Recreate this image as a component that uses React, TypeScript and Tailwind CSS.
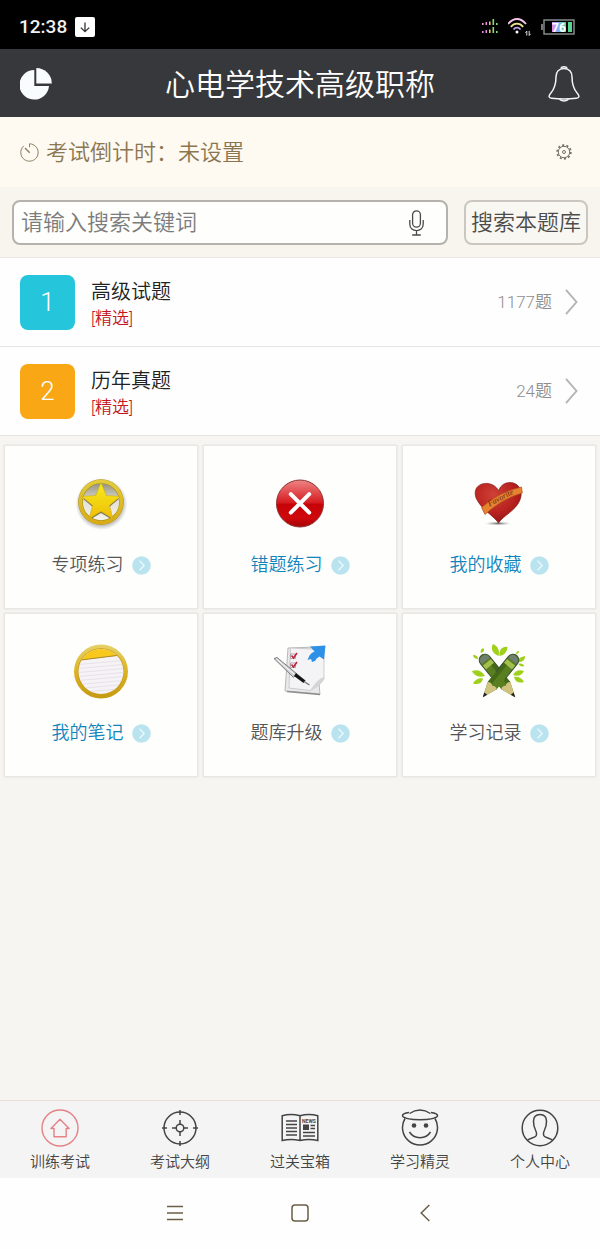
import type { ReactNode } from "react";

function StatusBar() {
  return (
    <div className="flex h-[49px] items-center justify-between bg-black pr-[25px] pl-[19px] pt-1 text-[#f0f0f0]">
      <div className="flex items-center gap-2">
        <span className="text-[19px] leading-6 font-medium">12:38</span>
        <svg width="20" height="20" viewBox="0 0 20 20" aria-hidden="true">
          <rect width="20" height="20" rx="2" fill="#fff" />
          <path d="M10 5.5v9M5.8 10.6 10 14.6l4.2-4" fill="none" stroke="#333" strokeWidth="1.3" />
        </svg>
      </div>
      <div className="flex items-center gap-2">
        <svg width="18" height="16" viewBox="0 0 18 16" aria-hidden="true">
          <g fill="#e58bd8">
            <rect x="0" y="4" width="1.6" height="2" />
            <rect x="0" y="12" width="1.6" height="2" />
            <rect x="3.5" y="3" width="1.6" height="3" />
            <rect x="3.5" y="11" width="1.6" height="3" />
          </g>
          <g fill="#e8c65a">
            <rect x="7" y="2.500" width="1.6" height="3.500" />
            <rect x="7" y="10.500" width="1.6" height="3.500" />
          </g>
          <g fill="#7fe07a">
            <rect x="10.5" y="0" width="1.6" height="6" />
            <rect x="10.5" y="8" width="1.6" height="6" />
            <rect x="14" y="4" width="1.6" height="2" />
            <rect x="14" y="12" width="1.6" height="2" />
          </g>
        </svg>
        <svg width="25" height="20" viewBox="0 0 25 20" fill="none" aria-hidden="true">
          <path d="M0 7C5.500 .3 12.500 .3 18 7" stroke="#f3c3ea" strokeWidth="1.800" />
          <path d="M2.800 9.800c3.600-4.200 8.800-4.200 12.400 0" stroke="#efe08a" strokeWidth="1.800" />
          <path d="M5.500 12.500c2-2.400 5-2.400 7 0" stroke="#c5a6ef" strokeWidth="1.800" />
          <circle cx="9" cy="15" r="1.500" fill="#fff" />
          <path d="M18.800 18.500v-4.400l-1.400 1.600M21.200 13.900v4.600l1.400-1.700" stroke="#ddd" strokeWidth="1" />
        </svg>
        <svg width="34" height="16" viewBox="0 0 34 16" aria-hidden="true">
          <defs>
            <linearGradient id="charge">
              <stop offset="0" stopColor="#f08be8" />
              <stop offset=".45" stopColor="#7fb2f5" />
              <stop offset="1" stopColor="#58d590" />
            </linearGradient>
          </defs>
          <rect x="0" y="5" width="2" height="6" fill="#777" />
          <rect x="3" y="1" width="30" height="14" fill="none" stroke="#8c9490" strokeWidth="1.4" />
          <rect x="11" y="3" width="14" height="10" fill="url(#charge)" />
          <rect x="27" y="3" width="4" height="10" fill="#58d590" />
          <text x="18" y="12.500" textAnchor="middle" fontSize="12" fontWeight="700" fill="#fff">76</text>
        </svg>
      </div>
    </div>
  );
}

function Header() {
  return (
    <header className="flex h-[68px] items-center justify-between bg-[#36383c] px-5 pt-[2px] text-white">
      <button type="button" aria-label="统计">
        <svg width="32" height="32" viewBox="0 0 32 32" fill="#f8fcff" aria-hidden="true">
          <path d="M14.300 2A14.800 14.800 0 1 0 29 18H14.300z" />
          <path d="M16.300 0A15.600 15.600 0 0 1 31.800 15.600H16.300z" />
        </svg>
      </button>
      <h1 className="pt-[2px] text-[30px] leading-10 font-[350]">心电学技术高级职称</h1>
      <button type="button" aria-label="通知">
        <svg width="32" height="36" viewBox="0 0 32 36" fill="none" stroke="#f4f4f4" strokeWidth="1.500" aria-hidden="true">
          <path d="M13.400 2.800v-1.400q2.600-1.200 5.200 0v1.400" />
          <path d="M16 2.500c-5 0-8 3.400-8 8.300 0 8.400-1.600 12.300-5.300 16.500-2.800 3.200-1.700 4.700 1 5 7.500.8 17.100.8 24.600 0 2.700-.3 3.800-1.800 1-5C25.600 23.100 24 19.200 24 10.800c0-4.900-3-8.300-8-8.300z" />
          <path d="M11.500 33.200c1.500 2.400 7.500 2.400 9 0" />
        </svg>
      </button>
    </header>
  );
}

function Countdown() {
  return (
    <section className="flex h-[70px] items-center justify-between bg-[#fef9f1] pr-7 pl-5 text-[#8a7650]">
      <div className="flex items-center gap-[7px]">
        <svg width="19" height="19" viewBox="0 0 19 19" fill="none" stroke="#8d8268" strokeWidth="1" aria-hidden="true">
          <path d="M3.800 2.900A8.700 8.700 0 1 0 9.500 .8v3.400" />
          <path d="M5 5l4.700 4.800" strokeWidth="1.500" />
        </svg>
        <p className="pt-[2px] text-[22px] leading-8 font-[350]">考试倒计时：未设置</p>
      </div>
      <button type="button" aria-label="设置">
        <svg width="16" height="16" viewBox="0 0 16 16" fill="none" stroke="#777064" aria-hidden="true">
          <circle cx="8" cy="8" r="5.700" />
          <circle cx="8" cy="8" r="6.900" strokeWidth="1.600" strokeDasharray="2.170 2.170" />
          <circle cx="8" cy="8" r="1.500" />
        </svg>
      </button>
    </section>
  );
}

function SearchBar() {
  return (
    <form className="flex gap-4 bg-[#f8f4ee] px-3 pt-[13px] pb-3" onSubmit={(e) => e.preventDefault()}>
      <div className="flex h-[45px] min-w-0 flex-1 items-center rounded-lg border-2 border-[#b5b1ac] bg-[#fefefc] pr-[22px] pl-[7px]">
        <input
          type="search"
          aria-label="搜索关键词"
          placeholder="请输入搜索关键词"
          className="min-w-0 flex-1 bg-transparent text-[22px] leading-8 font-[350] text-[#444] outline-none placeholder:text-[#7c7c7c]"
        />
        <button type="button" aria-label="语音输入">
          <svg width="15" height="26" viewBox="0 0 15 26" fill="none" stroke="#4a4a4a" strokeWidth="1.300" aria-hidden="true">
            <rect x="3.600" y=".8" width="7.800" height="16.400" rx="3.900" />
            <path d="M.8 10v4.200c0 8.600 13.400 8.600 13.400 0V10M7.500 20.700v4.200M3.200 25h8.600" />
          </svg>
        </button>
      </div>
      <button type="submit" className="h-[45px] rounded-lg border-2 border-[#cbc7c0] bg-[#f9f7f2] px-[5px] text-[22px] leading-8 font-[350] text-[#4c4c4a]">
        搜索本题库
      </button>
    </form>
  );
}

const banks = [
  { no: 1, title: "高级试题", count: "1177题", color: "bg-[#25c5dc]" },
  { no: 2, title: "历年真题", count: "24题", color: "bg-[#f9a715]" },
];

function BankList() {
  return (
    <ul className="border-t border-[#eae8e5] bg-[#fefefe]">
      {banks.map((b) => (
        <li key={b.no} className="border-b border-[#e4e4e2]">
          <a href="#bank" className="flex h-[88px] items-center px-5">
            <span className={`flex h-[55px] w-[55px] items-center justify-center rounded-lg text-[26px] leading-8 font-[350] text-white ${b.color}`}>
              {b.no}
            </span>
            <span className="ml-4 flex flex-1 flex-col pt-[3px]">
              <span className="text-[20px] leading-7 font-[350] text-[#222]">{b.title}</span>
              <span className="text-[17px] leading-6 font-[350] text-[#c4161c]">[精选]</span>
            </span>
            <span className="text-[17px] leading-6 font-[350] text-[#8f8f8f]">{b.count}</span>
            <svg className="ml-3" width="16" height="26" viewBox="0 0 16 26" fill="none" stroke="#b4b4b4" strokeWidth="1.900" aria-hidden="true">
              <path d="M2 .8 12.500 13 2 25.200" />
            </svg>
          </a>
        </li>
      ))}
    </ul>
  );
}

function StarIcon() {
  return (
    <svg width="56" height="56" viewBox="0 0 56 56" aria-hidden="true">
      <defs>
        <linearGradient id="gold" x2="0" y2="1">
          <stop offset="0" stopColor="#e2cb3c" />
          <stop offset="1" stopColor="#d9ac15" />
        </linearGradient>
        <linearGradient id="starFill" x2="0" y2="1">
          <stop offset="0" stopColor="#f8ec1c" />
          <stop offset="1" stopColor="#eebd08" />
        </linearGradient>
        <radialGradient id="starShade">
          <stop offset=".75" stopColor="#666" stopOpacity=".6" />
          <stop offset="1" stopColor="#888" stopOpacity="0" />
        </radialGradient>
        <linearGradient id="starWell" x2="0" y2="1">
          <stop offset="0" stopColor="#8d8a78" />
          <stop offset=".5" stopColor="#e4e2d8" />
          <stop offset="1" stopColor="#f6f5ef" />
        </linearGradient>
      </defs>
      <circle cx="28.500" cy="29" r="26" fill="url(#starShade)" />
      <circle cx="28" cy="27" r="20.500" fill="url(#starWell)" />
      <path d="M28 10l5 12 13 .8-10 8.400 3.200 12.600L28 37l-11.200 6.800L20 31.200l-10-8.400 13-.8z" fill="#777055" transform="translate(0 1)" />
      <circle cx="28" cy="27" r="20.500" fill="none" stroke="#a48f1a" strokeWidth="4.600" />
      <circle cx="28" cy="27" r="20.600" fill="none" stroke="url(#gold)" strokeWidth="3.800" />
      <path d="M28 7.500l5.300 13 14 .9-10.800 9 3.500 13.600L28 36.600 16 44l3.500-13.600-10.800-9 14-.9z" fill="url(#starFill)" stroke="#c5a515" strokeWidth=".5" />
    </svg>
  );
}

function CrossIcon() {
  return (
    <svg width="56" height="56" viewBox="0 0 56 56" aria-hidden="true">
      <defs>
        <linearGradient id="red" x2="0" y2="1">
          <stop offset="0" stopColor="#ef8585" />
          <stop offset=".48" stopColor="#d51c20" />
          <stop offset=".52" stopColor="#c50308" />
          <stop offset=".8" stopColor="#cf080c" />
          <stop offset="1" stopColor="#a50407" />
        </linearGradient>
      </defs>
      <circle cx="28" cy="28.500" r="23.500" fill="url(#red)" stroke="#8e3434" strokeWidth="1" />
      <path d="M18.800 19.200l18.400 18.400M37.200 19.200 18.800 37.600" stroke="#fff" strokeWidth="4" strokeLinecap="round" />
    </svg>
  );
}

function HeartIcon() {
  return (
    <svg width="56" height="56" viewBox="0 0 56 56" aria-hidden="true">
      <defs>
        <radialGradient id="heart" cx=".4" cy=".3" r=".75">
          <stop offset="0" stopColor="#cf4136" />
          <stop offset=".6" stopColor="#b8221f" />
          <stop offset="1" stopColor="#8d1414" />
        </radialGradient>
        <radialGradient id="heartShade">
          <stop offset="0" stopColor="#666" />
          <stop offset="1" stopColor="#aaa" stopOpacity="0" />
        </radialGradient>
      </defs>
      <ellipse cx="27" cy="48.500" rx="13" ry="2" fill="url(#heartShade)" />
      <path d="M27.500 48C23 41 11 35 5.500 24 1 13 9 7.500 17 8.500q7 1 10.500 7Q31 7.500 39 7.500c9 0 14 9 9.500 18.500C44 36 33 40 27.500 48z" fill="url(#heart)" stroke="#7f1a1a" strokeWidth=".7" />
      <path d="M10.500 32.500Q28 17 50.500 12l.8 6Q31 23.500 14 39.500z" fill="#e8822f" stroke="#b24e1c" strokeWidth=".7" />
      <text x="18.500" y="31.500" transform="rotate(-28 18.500 31.500)" fontSize="8" fontFamily="Liberation Serif, serif" fontStyle="italic" fill="#5f2410">Favorite</text>
    </svg>
  );
}

function NotesIcon() {
  return (
    <svg width="56" height="56" viewBox="0 0 56 56" aria-hidden="true">
      <defs>
        <linearGradient id="ring" x2="0" y2="1">
          <stop offset="0" stopColor="#e6d268" />
          <stop offset=".5" stopColor="#ddb325" />
          <stop offset="1" stopColor="#c49a10" />
        </linearGradient>
        <clipPath id="noteDisc">
          <circle cx="28" cy="28.500" r="22.500" />
        </clipPath>
      </defs>
      <circle cx="28" cy="28.500" r="27" fill="url(#ring)" />
      <circle cx="28" cy="28.500" r="23.200" fill="#c69a18" />
      <g clipPath="url(#noteDisc)">
        <rect width="56" height="56" fill="#f6f3f6" />
        <path d="M0 0h56v11L0 18z" fill="#f8c81d" />
        <path d="M0 18 56 11" stroke="#a7872c" strokeWidth="1" />
        <path d="M0 22l56-5M0 26l56-5M0 30l56-5M0 34l56-5M0 38l56-5M0 42l56-5M0 46l56-5M0 50l56-5M0 54l56-5" stroke="#e2dde6" strokeWidth=".8" />
      </g>
    </svg>
  );
}

function ChecklistIcon() {
  return (
    <svg width="56" height="56" viewBox="0 0 56 56" aria-hidden="true">
      <path d="M16 5 44 4l4 47.500-4-1-31-2.500z" fill="#e9e9ea" stroke="#aaa" strokeWidth=".8" />
      <path d="M18.500 5 52 6.500V36q-4 7-14 11.500L17 45z" fill="#f4f4f6" stroke="#c3c3c6" strokeWidth=".8" />
      <path d="M52 34q-6 1-14 13.500Q47 44 52 36z" fill="#d5d5d8" />
      <path d="M15 48.500l33 3" stroke="#8d8d8d" strokeWidth="1.500" />
      <path d="M18.500 11h5v4.500h-5zM18.500 20h5v4.500h-5z" fill="#fff" stroke="#b69fa6" />
      <path d="M19.500 12.500l2 2.500 3.500-5M19.500 21.500l2 2.500 3.500-5" fill="none" stroke="#b8243c" strokeWidth="1.600" />
      <path d="M38 3.500 53.500 2.500l-1.500 14-4.500-3q-3.500 1.500-4.500 4.500l-3 1-1-3-3.500 1 2-4.500q2-3 5-4z" fill="#2d91e8" />
      <path d="M2 15.500l3-1L25 31l-3.500 3.500z" fill="#cfcfd2" stroke="#707176" strokeWidth=".9" />
      <path d="M4.500 16 22.500 31.500" stroke="#fff" strokeWidth="1" />
      <path d="M24 30l9.500 7.500-2 2.500-9.500-7z" fill="#161616" />
      <path d="M32 38.500 37.500 42" stroke="#777" strokeWidth="1.400" />
    </svg>
  );
}

function Pencil({ flip }: { flip?: boolean }) {
  return (
    <g transform={flip ? "translate(56 0) scale(-1 1)" : undefined}>
      <g transform="translate(14 17) rotate(-39)">
        <path d="M-5.800 0a5.800 5.800 0 0 1 11.600 0v33L0 48l-5.800-15z" fill="#5a7f20" />
        <path d="M-5.800 1a5.800 5.800 0 0 1 11.600 0z" fill="#6f7f70" />
        <path d="M-5.800 3h11.600v5h-11.600z" fill="#a3c04c" />
        <path d="M1.500 8h4.300v25H1.500z" fill="#456a17" />
        <path d="M-5.800 33q2.900-2.500 5.800 0 2.900-2.500 5.800 0L0 48z" fill="#d0c380" />
        <path d="M-1.800 43.300h3.600L0 48z" fill="#222" />
        <path d="M-5.800 20V0a5.800 5.800 0 0 1 11.600 0v20" fill="none" stroke="#3d5230" strokeWidth="1" />
      </g>
    </g>
  );
}

function PencilsIcon() {
  return (
    <svg width="56" height="56" viewBox="0 0 56 56" aria-hidden="true">
      <g fill="#9fd01b">
        <path d="M27.500 13C20 10 20 4 22 1c5 2 7 7 5.500 12z" />
        <path d="M28.500 13c-1-6 3-10 8-9-.5 5-3 8-8 9z" />
        <path d="M14 33C7 35 3 32 1 28c5-2 10-.500 13 5z" />
        <path d="M12 35.500c-4-1-8 1-10 5 5 1.500 9 0 10-5z" />
        <path d="M42 32c2-4 6-6 11-4-2 4-6 6-11 4z" />
        <path d="M43 34c4-1 8 1 10 5-5 1.500-9 0-10-5z" />
        <path d="M47 19c0-3 2-5 7-6 0 4-2 6-7 6z" />
        <path d="M47.500 21c2-1 5 0 6 2-3 1-5 0-6-2zM10 10c-1-2 0-4 2-5 2 2 1 4-2 5zM7 16c-3 0-5-2-5-4 3 0 5 1 5 4zM45 11c0-2 1-3 3-3 0 2-1 3-3 3z" />
      </g>
      <Pencil />
      <Pencil flip />
    </svg>
  );
}

const tiles: { label: string; icon: ReactNode; active?: boolean }[] = [
  { label: "专项练习", icon: <StarIcon /> },
  { label: "错题练习", icon: <CrossIcon />, active: true },
  { label: "我的收藏", icon: <HeartIcon />, active: true },
  { label: "我的笔记", icon: <NotesIcon />, active: true },
  { label: "题库升级", icon: <ChecklistIcon /> },
  { label: "学习记录", icon: <PencilsIcon /> },
];

function TileGrid() {
  return (
    <div className="grid grid-cols-3 gap-x-[5px] gap-y-1 px-1 pt-[9px]">
      {tiles.map((t) => (
        <a key={t.label} href="#practice" className="flex flex-col items-center gap-5 border border-[#e8e7e3] bg-[#fefefd] pt-[29px] pb-[29px] shadow-[0_0_2px_#dddcd8]">
          {t.icon}
          <span className={`flex items-center gap-2 text-[18px] leading-7 font-[350] ${t.active ? "text-[#1184bb]" : "text-[#555]"}`}>
            {t.label}
            <svg width="19" height="19" viewBox="0 0 19 19" aria-hidden="true">
              <circle cx="9.500" cy="9.500" r="9.300" fill="#b9e3ee" />
              <path d="M7.500 4.800 12.200 9.500l-4.700 4.700" fill="none" stroke="#ecf9fc" strokeWidth="1.300" />
            </svg>
          </span>
        </a>
      ))}
    </div>
  );
}

function HomeIcon() {
  return (
    <svg width="38" height="38" viewBox="0 0 38 38" fill="none" stroke="#e58288" strokeWidth="1.400" aria-hidden="true">
      <circle cx="19" cy="19" r="18" />
      <path d="M19 10.300 10 19.500h3v8.300h12.200v-8.300h2.900z" strokeLinejoin="round" />
    </svg>
  );
}

function TargetIcon() {
  return (
    <svg width="38" height="38" viewBox="0 0 38 38" fill="none" stroke="#444" strokeWidth="1.500" aria-hidden="true">
      <circle cx="19" cy="19" r="16" />
      <circle cx="19" cy="19" r="3.800" />
      <path d="M19 1v5M19 32v5M1 19h5M32 19h5M19 11v4.200M19 22.800V27M11 19h4.200M22.800 19H27" />
    </svg>
  );
}

function NewsIcon() {
  return (
    <svg width="38" height="38" viewBox="0 0 38 38" fill="none" stroke="#444" strokeWidth="1.500" aria-hidden="true">
      <path d="M19 6.800Q10 4.200 1.200 6.800v24.700q8.800-2 17.800 0 9-2 17.800 0V6.800Q28 4.200 19 6.800zv24.700" />
      <path d="M5 12h11M5 15.500h11M5 19h11M5 22.500h11M5 26h11M29.500 16.500H34M29.500 19.500H34M22 23.500h12M22 27h12" />
      <rect x="22" y="15.500" width="6" height="5.500" fill="#444" stroke="none" />
      <text x="28" y="13.500" textAnchor="middle" fontSize="5" fontWeight="700" fill="#444" stroke="none">NEWS</text>
    </svg>
  );
}

function AngelIcon() {
  return (
    <svg width="38" height="38" viewBox="0 0 38 38" fill="none" stroke="#444" strokeWidth="1.500" aria-hidden="true">
      <path d="M8.500 4.500C13 1.500 16 1 19 1s6 .5 10.500 3.500M4 9.500a17.500 17.500 0 1 0 30 0" />
      <path d="M8 3.500C4 4 1.500 5.300 1.500 6.800c0 2.200 7.800 4 17.500 4s17.500-1.800 17.500-4c0-1.500-2.500-2.800-6.500-3.300" />
      <circle cx="13" cy="16.500" r="2.300" fill="#444" stroke="none" />
      <circle cx="25" cy="16.500" r="2.300" fill="#444" stroke="none" />
      <path d="M8.500 23c4.500 7.500 16.500 7.500 21 0" />
    </svg>
  );
}

function ProfileIcon() {
  return (
    <svg width="38" height="38" viewBox="0 0 38 38" fill="none" stroke="#444" strokeWidth="1.500" aria-hidden="true">
      <circle cx="19" cy="19" r="17.800" />
      <path d="M6.500 31.300c2.500-2.500 8-2.300 8.800-4.800.6-2.200.3-3.500-.8-5.500-1.300-2.500-2-5-2-8.500C12.500 7.500 15 5.500 19 5.500s6.500 2 6.500 7c0 3.500-.7 6-2 8.500-1.100 2-1.400 3.300-.8 5.500.8 2.500 6.300 2.300 8.800 4.800" />
    </svg>
  );
}

const tabs: { label: string; icon: ReactNode }[] = [
  { label: "训练考试", icon: <HomeIcon /> },
  { label: "考试大纲", icon: <TargetIcon /> },
  { label: "过关宝箱", icon: <NewsIcon /> },
  { label: "学习精灵", icon: <AngelIcon /> },
  { label: "个人中心", icon: <ProfileIcon /> },
];

function TabBar() {
  return (
    <nav className="grid grid-cols-5 border-t border-[#eadfd8] bg-[#f4f4f4] pt-2 pb-1">
      {tabs.map((t) => (
        <a key={t.label} href="#tab" className="flex flex-col items-center gap-[3px] text-[15px] leading-6 font-[350] text-[#444]">
          {t.icon}
          {t.label}
        </a>
      ))}
    </nav>
  );
}

function SystemNav() {
  return (
    <div className="grid h-[71px] grid-cols-3 items-center justify-items-center bg-[#fefefe] px-28 pb-[2px]">
      <button type="button" aria-label="菜单">
        <svg width="16" height="18" viewBox="0 0 16 18" fill="none" stroke="#6a5f45" strokeWidth="1.500" aria-hidden="true">
          <path d="M0 2.500h16M0 9h16M0 15.500h16" />
        </svg>
      </button>
      <button type="button" aria-label="主页">
        <svg width="18" height="18" viewBox="0 0 18 18" fill="none" stroke="#6a5f45" strokeWidth="1.500" aria-hidden="true">
          <rect x="1" y="1" width="16" height="16" rx="3" />
        </svg>
      </button>
      <button type="button" aria-label="返回">
        <svg width="10" height="18" viewBox="0 0 10 18" fill="none" stroke="#6a5f45" strokeWidth="1.500" aria-hidden="true">
          <path d="M9.300 1 1.200 9l8.100 8" />
        </svg>
      </button>
    </div>
  );
}

export default function App() {
  return (
    <div className="flex min-h-screen flex-col bg-[#f7f5f1] font-[Roboto,'Noto_Sans_CJK_SC',sans-serif]">
      <StatusBar />
      <Header />
      <main className="flex-1">
        <Countdown />
        <SearchBar />
        <BankList />
        <TileGrid />
      </main>
      <TabBar />
      <SystemNav />
    </div>
  );
}
